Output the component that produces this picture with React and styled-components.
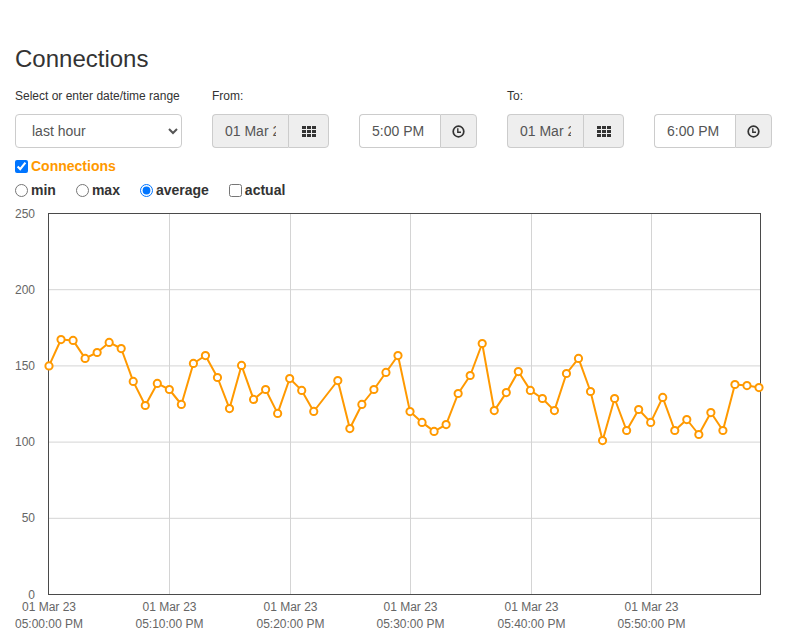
import React from "react";
import styled, { createGlobalStyle } from "styled-components";

const Global = createGlobalStyle`
  html, body { margin: 0; padding: 0; background: #fff; }
  body { font-family: "Liberation Sans", Arial, sans-serif; color: #333; font-size: 14px; }
  * { box-sizing: border-box; }
`;

const Page = styled.div`
  padding: 46px 15px 0 15px;
  width: 787px;
`;

const Title = styled.h1`
  margin: 0;
  font-size: 24px;
  line-height: 26px;
  font-weight: 400;
  color: #333;
`;

const FormRow = styled.div`
  display: flex;
  gap: 30px;
  margin-top: 16px;
`;

const Group = styled.div`
  display: flex;
  flex-direction: column;
`;

const Label = styled.label`
  display: block;
  font-size: 12px;
  line-height: 17px;
  height: 17px;
  margin-bottom: 9px;
  color: #333;
`;

const Select = styled.select`
  width: 167px;
  height: 34px;
  padding: 0 8px 0 12px;
  font-family: "Liberation Sans", Arial, sans-serif;
  font-size: 14px;
  color: #555;
  background: #fff;
  border: 1px solid #ccc;
  border-radius: 4px;
`;

const InputGroup = styled.div`
  display: flex;
  height: 34px;
`;

const TextInput = styled.input`
  width: ${(p) => p.$w}px;
  height: 34px;
  padding: 0 12px;
  font-family: "Liberation Sans", Arial, sans-serif;
  font-size: 14px;
  color: #555;
  background: ${(p) => (p.$grey ? "#eee" : "#fff")};
  border: 1px solid #ccc;
  border-right: none;
  border-radius: 4px 0 0 4px;
  outline: none;
`;

const Addon = styled.span`
  width: ${(p) => p.$w}px;
  height: 34px;
  display: flex;
  align-items: center;
  justify-content: center;
  background: #eee;
  border: 1px solid #ccc;
  border-radius: 0 4px 4px 0;
  color: #333;
`;

const OptionRow = styled.div`
  display: flex;
  align-items: center;
  height: 24px;
  margin-top: ${(p) => p.$mt || 0}px;
`;

const Choice = styled.label`
  display: flex;
  align-items: center;
  font-size: 14px;
  line-height: 24px;
  font-weight: 700;
  color: ${(p) => p.$color || "#333"};
  margin-right: 20px;
  input {
    width: 13px;
    height: 13px;
    margin: 0 3px 0 0;
  }
`;

const ChartBox = styled.div`
  margin-top: 2px;
  margin-left: -15px;
  width: 787px;
  height: 430px;
`;

const GridIcon = () => (
  <svg width="14" height="11" viewBox="0 0 14 11">
    {[0, 1, 2].map((r) =>
      [0, 1, 2].map((c) => (
        <rect key={r + "-" + c} x={c * 5} y={r * 4} width="4" height="3" fill="#333" />
      ))
    )}
  </svg>
);

const ClockIcon = () => (
  <svg width="13" height="13" viewBox="0 0 13 13">
    <circle cx="6.5" cy="6.5" r="5.3" fill="none" stroke="#333" strokeWidth="1.7" />
    <path d="M5.8 3.2 V7.2 H9" fill="none" stroke="#333" strokeWidth="1.4" />
  </svg>
);

const values = [
  150, 167.3, 166.7, 154.9, 158.8, 165.4, 161.4, 139.8, 124, 138.5,
  134.5, 124.7, 151.6, 156.8, 142.4, 122, 150.3, 128, 134.5, 118.8,
  141.7, 133.9, 120.1, null, 140.4, 108.9, 124.7, 134.5, 145.7, 156.8,
  120, 112.9, 107, 111.5, 131.9, 143.7, 164.7, 120.7, 132.5, 146.3,
  133.9, 128.6, 120.7, 145, 154.9, 133.2, 101, 128.6, 107.6, 121.4,
  112.9, 129.3, 107.6, 114.8, 105, 119.4, 107.6, 137.8, 137.1, 135.8,
];

const X0 = 48.5;
const X1 = 760.5;
const Y0 = 594.5;
const Y250 = 213.5;
const TOP = 204;
const ORANGE = "#ff9900";

const px = (i) => 49 + (i * (759 - 49)) / 59;
const py = (v) => Y0 - (v / 250) * (Y0 - Y250) - TOP;

const Chart = () => {
  const pts = values
    .map((v, i) => (v == null ? null : [px(i), py(v)]))
    .filter(Boolean);
  const path = pts.map((p, i) => (i ? "L" : "M") + p[0].toFixed(1) + " " + p[1].toFixed(1)).join(" ");
  const yTicks = [0, 50, 100, 150, 200, 250];
  const xTicks = [
    [49, "05:00:00 PM"],
    [169.5, "05:10:00 PM"],
    [290.5, "05:20:00 PM"],
    [410.5, "05:30:00 PM"],
    [531.5, "05:40:00 PM"],
    [651.5, "05:50:00 PM"],
  ];
  const top = Y250 - TOP;
  const bottom = Y0 - TOP;
  return (
    <svg width="787" height="430" viewBox="0 0 787 430" style={{ display: "block" }}>
      {yTicks.slice(1, 5).map((t) => (
        <line key={t} x1={X0} x2={X1} y1={py(t)} y2={py(t)} stroke="#d4d4d4" strokeWidth="1" />
      ))}
      {xTicks.slice(1).map(([x]) => (
        <line key={x} x1={x} x2={x} y1={top} y2={bottom} stroke="#d4d4d4" strokeWidth="1" />
      ))}
      <rect x={X0} y={top} width={X1 - X0} height={bottom - top} fill="none" stroke="#4a4a4a" strokeWidth="1" />
      {yTicks.map((t) => (
        <text
          key={t}
          x="35"
          y={py(t) + 4}
          textAnchor="end"
          fontFamily="Liberation Sans, Arial, sans-serif"
          fontSize="12"
          fill="#666"
        >
          {t}
        </text>
      ))}
      {xTicks.map(([x, label]) => (
        <g key={label}>
          <text x={x} y={611 - TOP} textAnchor="middle" fontFamily="Liberation Sans, Arial, sans-serif" fontSize="12" fill="#666">
            01 Mar 23
          </text>
          <text x={x} y={628 - TOP} textAnchor="middle" fontFamily="Liberation Sans, Arial, sans-serif" fontSize="12" fill="#666">
            {label}
          </text>
        </g>
      ))}
      <path d={path} fill="none" stroke={ORANGE} strokeWidth="2" strokeLinejoin="round" />
      {pts.map((p, i) => (
        <circle key={i} cx={p[0]} cy={p[1]} r="3.6" fill="#fff" stroke={ORANGE} strokeWidth="2" />
      ))}
    </svg>
  );
};

export default function App() {
  return (
    <>
      <Global />
      <Page>
        <Title>Connections</Title>
        <FormRow>
          <Group>
            <Label>Select or enter date/time range</Label>
            <Select defaultValue="last hour">
              <option>last hour</option>
              <option>last day</option>
              <option>last week</option>
            </Select>
          </Group>
          <Group>
            <Label>From:</Label>
            <InputGroup>
              <TextInput $w={76} $grey readOnly defaultValue="01 Mar 2023" />
              <Addon $w={41}><GridIcon /></Addon>
            </InputGroup>
          </Group>
          <Group>
            <Label />
            <InputGroup>
              <TextInput $w={81} defaultValue="5:00 PM" />
              <Addon $w={37}><ClockIcon /></Addon>
            </InputGroup>
          </Group>
          <Group>
            <Label>To:</Label>
            <InputGroup>
              <TextInput $w={76} $grey readOnly defaultValue="01 Mar 2023" />
              <Addon $w={41}><GridIcon /></Addon>
            </InputGroup>
          </Group>
          <Group>
            <Label />
            <InputGroup>
              <TextInput $w={81} defaultValue="6:00 PM" />
              <Addon $w={37}><ClockIcon /></Addon>
            </InputGroup>
          </Group>
        </FormRow>
        <OptionRow $mt={6}>
          <Choice $color={ORANGE}>
            <input type="checkbox" defaultChecked />
            Connections
          </Choice>
        </OptionRow>
        <OptionRow>
          <Choice><input type="radio" name="agg" />min</Choice>
          <Choice><input type="radio" name="agg" />max</Choice>
          <Choice><input type="radio" name="agg" defaultChecked />average</Choice>
          <Choice><input type="checkbox" />actual</Choice>
        </OptionRow>
        <ChartBox>
          <Chart />
        </ChartBox>
      </Page>
    </>
  );
}
